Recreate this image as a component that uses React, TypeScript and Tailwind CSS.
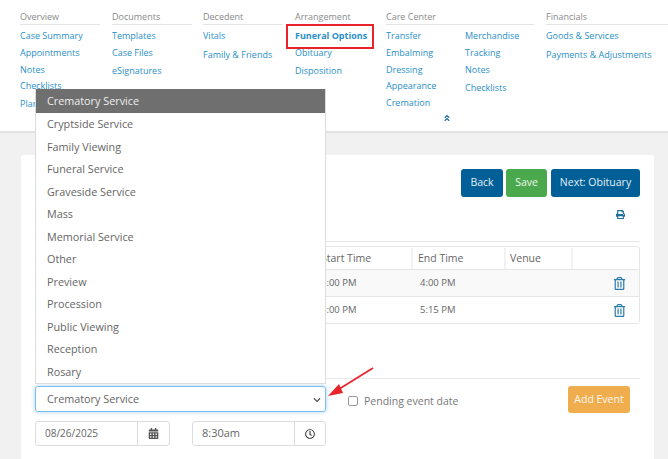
import type { ReactNode } from "react";
import { FaAngleDoubleUp, FaCalendarAlt, FaChevronDown, FaPrint, FaRegClock, FaRegTrashAlt } from "react-icons/fa";

const link = "text-[9px] leading-[14px] text-[#2a8fc7] whitespace-nowrap";
const eventTypes = [
  "Cryptside Service",
  "Family Viewing",
  "Funeral Service",
  "Graveside Service",
  "Mass",
  "Memorial Service",
  "Other",
  "Preview",
  "Procession",
  "Public Viewing",
  "Reception",
  "Rosary",
];

function NavGroup({ title, width, children }: { title: string; width: string; children: ReactNode }) {
  return (
    <div className={`shrink-0 ${width}`}>
      <div className="h-[25px] border-b border-[#e4e4e4] pt-[10px] text-[9px] leading-[14px] text-[#8a8a8a]">{title}</div>
      {children}
    </div>
  );
}

function Row({ start, end, shaded }: { start: string; end: string; shaded?: boolean }) {
  return (
    <div className={`flex h-[27px] items-center border-t border-[#e6e6e6] text-[9.5px] text-[#666] ${shaded ? "bg-[#f9f9f9]" : "bg-white"}`}>
      <div className="w-[281px]" />
      <div className="w-[96px] pl-[4px]">{start}</div>
      <div className="w-[93px] pl-[7px]">{end}</div>
      <div className="w-[67px]" />
      <div className="flex w-[66px] justify-end pr-[13px]">
        <FaRegTrashAlt size={13} className="text-[#2a7cab]" />
      </div>
    </div>
  );
}

export default function App() {
  return (
    <div className="relative h-[459px] w-[668px] overflow-hidden bg-[#f1f1f1] font-['Open_Sans',sans-serif]">
      <nav className="relative h-[133px] border-b-2 border-[#e2e2e2] bg-white pl-5">
        <div className="flex">
          <NavGroup title="Overview" width="w-[80px] mr-[12px]">
            <div className="flex flex-col pt-[4px]">
              <span className={`${link} mb-[3px]`}>Case Summary</span>
              <span className={`${link} mb-[3px]`}>Appointments</span>
              <span className={`${link} mb-[2px]`}>Notes</span>
              <span className={`${link} mb-[4px]`}>Checklists</span>
              <span className={link}>Planning</span>
            </div>
          </NavGroup>
          <NavGroup title="Documents" width="w-[80px] mr-[11px]">
            <div className="flex flex-col pt-[4px]">
              <span className={`${link} mb-[3px]`}>Templates</span>
              <span className={`${link} mb-[4px]`}>Case Files</span>
              <span className={link}>eSignatures</span>
            </div>
          </NavGroup>
          <NavGroup title="Decedent" width="w-[80px] mr-[12px]">
            <div className="flex flex-col pt-[4px]">
              <span className={`${link} mb-[5px]`}>Vitals</span>
              <span className={link}>Family &amp; Friends</span>
            </div>
          </NavGroup>
          <NavGroup title="Arrangement" width="w-[79px] mr-[12px]">
            <div className="flex flex-col pt-[4px]">
              <span className={`${link} mb-[3px] font-bold text-[#1f7fb6]`}>Funeral Options</span>
              <span className={`${link} mb-[4px]`}>Obituary</span>
              <span className={link}>Disposition</span>
            </div>
          </NavGroup>
          <NavGroup title="Care Center" width="w-[148px] mr-[12px]">
            <div className="flex pt-[4px]">
              <div className="flex w-[79px] flex-col">
                <span className={`${link} mb-[3px]`}>Transfer</span>
                <span className={`${link} mb-[3px]`}>Embalming</span>
                <span className={`${link} mb-[2px]`}>Dressing</span>
                <span className={`${link} mb-[3px]`}>Appearance</span>
                <span className={link}>Cremation</span>
              </div>
              <div className="flex flex-col">
                <span className={`${link} mb-[3px]`}>Merchandise</span>
                <span className={`${link} mb-[3px]`}>Tracking</span>
                <span className={`${link} mb-[4px]`}>Notes</span>
                <span className={link}>Checklists</span>
              </div>
            </div>
          </NavGroup>
          <NavGroup title="Financials" width="w-[122px]">
            <div className="flex flex-col pt-[4px]">
              <span className={`${link} mb-[5px]`}>Goods &amp; Services</span>
              <span className={link}>Payments &amp; Adjustments</span>
            </div>
          </NavGroup>
        </div>
        <FaAngleDoubleUp size={8} className="absolute left-[443px] top-[114px] text-[#1f6f9f]" />
        <div className="absolute left-[286px] top-[24px] h-[25px] w-[88px] border-2 border-[#e8232a]" />
      </nav>

      <main className="ml-[21px] mt-[22px] h-[400px] w-[633px] rounded-t-[3px] bg-white px-[14px] pt-[14px]">
        <div className="flex justify-end gap-[3px]">
          <button className="h-[28px] w-[42px] rounded-[3px] bg-[#005f96] text-[10.5px] text-white/90">Back</button>
          <button className="h-[28px] w-[41px] rounded-[3px] bg-[#4aa84d] text-[10.5px] text-white/90">Save</button>
          <button className="ml-[1px] h-[28px] w-[89px] rounded-[3px] bg-[#005f96] text-[10.5px] text-white/90">Next: Obituary</button>
        </div>
        <div className="flex h-[45px] justify-end border-b border-[#e8e8e8] pr-[15px] pt-[13px]">
          <FaPrint size={9} className="text-[#1f6f9f]" />
        </div>
        <div className="mt-[4px] overflow-hidden rounded-[3px] border border-[#e6e6e6]">
          <div className="flex h-[22px] items-center pt-[1px] text-[10.5px] text-[#666]">
            <div className="h-full w-[281px]" />
            <div className="flex h-full w-[96px] items-center border-r-2 border-[#f1f1f1] pl-[4px]">Start Time</div>
            <div className="flex h-full w-[93px] items-center border-r-2 border-[#f1f1f1] pl-[5px]">End Time</div>
            <div className="flex h-full w-[67px] items-center border-r-2 border-[#f1f1f1] pl-[4px]">Venue</div>
            <div className="w-[66px]" />
          </div>
          <Row start="3:00 PM" end="4:00 PM" shaded />
          <Row start="4:00 PM" end="5:15 PM" />
        </div>
        <div className="mt-[54px] flex items-start border-t border-[#e8e8e8] pt-[7px]">
          <div className="w-[291px]">
            <div className="flex h-[26px] items-center justify-between rounded-[3px] border border-[#7fbdea] pl-[11px] pr-[3px] pt-[1px] text-[10.8px] text-[#666] shadow-[0_0_4px_rgba(102,175,233,0.6)]">
              <span>Crematory Service</span>
              <FaChevronDown size={8} className="mr-[1px] text-[#555]" />
            </div>
            <div className="mt-[9px] flex justify-between">
              <div className="flex h-[25px] w-[135px] rounded-[3px] border border-[#ddd] text-[#666]">
                <div className="flex w-[102px] items-center border-r border-[#ddd] pl-[9px] text-[10px]">08/26/2025</div>
                <div className="flex flex-1 items-center justify-center">
                  <FaCalendarAlt size={11} className="text-[#555]" />
                </div>
              </div>
              <div className="flex h-[25px] w-[134px] rounded-[3px] border border-[#ddd] text-[#666]">
                <div className="flex w-[102px] items-center border-r border-[#ddd] pl-[9px] text-[11px]">8:30am</div>
                <div className="flex flex-1 items-center justify-center">
                  <FaRegClock size={10} className="text-[#333]" />
                </div>
              </div>
            </div>
          </div>
          <label className="ml-[22px] mt-[7px] flex items-center gap-[6px] text-[10.5px] leading-[16px] text-[#777]">
            <span className="h-[10px] w-[10px] rounded-[2px] border border-[#999]" />
            Pending event date
          </label>
          <button className="ml-auto mr-[10px] h-[27px] w-[62px] rounded-[3px] bg-[#f0ad4e] text-[10.5px] text-white/90">Add Event</button>
        </div>
      </main>

      <div className="absolute left-[35px] top-[89px] w-[291px] border-x border-b border-[#ddd] bg-white text-[10.8px] text-[#666]">
        <div className="flex h-[24px] items-center bg-[#6f6f6f] pl-[11px] pt-[1px] text-[#eee]">Crematory Service</div>
        {eventTypes.map((t) => (
          <div key={t} className="flex h-[22.5px] items-center pl-[11px]">
            {t}
          </div>
        ))}
      </div>

      <svg className="absolute left-[326px] top-[366px]" width="50" height="34" viewBox="0 0 50 34">
        <line x1="47" y1="2" x2="10" y2="25" stroke="#e8232a" strokeWidth="1.6" />
        <polygon points="2,30 13,18 17,27" fill="#e8232a" />
      </svg>
    </div>
  );
}
